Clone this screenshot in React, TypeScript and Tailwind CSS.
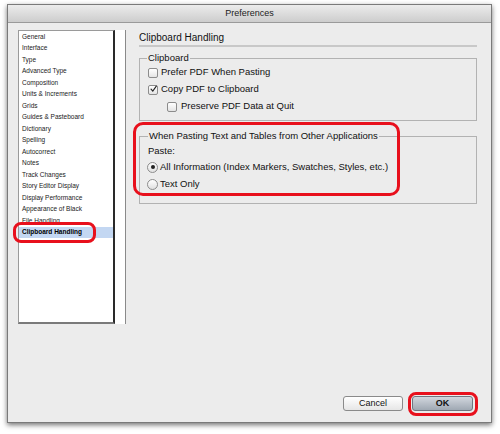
import React from 'react';

const FONT = { fontFamily: '"Liberation Sans", Arial, sans-serif' };

const sections = [
  'General',
  'Interface',
  'Type',
  'Advanced Type',
  'Composition',
  'Units & Increments',
  'Grids',
  'Guides & Pasteboard',
  'Dictionary',
  'Spelling',
  'Autocorrect',
  'Notes',
  'Track Changes',
  'Story Editor Display',
  'Display Performance',
  'Appearance of Black',
  'File Handling',
  'Clipboard Handling',
];

function Checkbox({ checked }: { checked?: boolean }) {
  return (
    <span className="w-[10px] h-[10px] rounded-[2px] border border-[#8c8c8c] bg-gradient-to-b from-white to-[#e4e4e4] flex items-center justify-center shrink-0">
      {checked && (
        <svg width="10" height="10" viewBox="0 0 10 10" className="-mt-[2px] ml-[1px]">
          <path d="M1.5 5.2 L4 8 L9 1" fill="none" stroke="#222" strokeWidth="1.6" strokeLinecap="round" />
        </svg>
      )}
    </span>
  );
}

function Radio({ checked }: { checked?: boolean }) {
  return (
    <span className="w-[11px] h-[11px] rounded-full border border-[#8c8c8c] bg-gradient-to-b from-white to-[#e0e0e0] flex items-center justify-center shrink-0">
      {checked && <span className="w-[4px] h-[4px] rounded-full bg-[#222]" />}
    </span>
  );
}

export default function App() {
  return (
    <div className="relative w-[500px] h-[434px] bg-white pt-[4px] pl-[7px]" style={FONT}>
      {/* Dialog window */}
      <div className="w-[485px] h-[419px] bg-[#ececec] border border-[#7a7a7a] shadow-[0_2px_5px_rgba(0,0,0,0.55)] flex flex-col">
        <div className="h-[18px] shrink-0 bg-gradient-to-b from-[#ececec] to-[#cdcdcd] border-b border-[#9a9a9a] flex items-center justify-center text-[9px] text-[#222]">
          Preferences
        </div>

        <div className="flex flex-1">
          {/* Sidebar list */}
          <div className="pl-[10px] pt-[7px] flex">
            <div className="w-[97px] h-[294px] bg-white border-l border-t border-[#9a9a9a] border-r-2 border-r-[#2a2a2a] border-b-2 border-b-[#7a7a7a]">
              {sections.map((s) => (
                <div
                  key={s}
                  className={`h-[11.53px] flex items-center pl-[3px] text-[6.5px] leading-none ${
                    s === 'Clipboard Handling' ? 'bg-[#c3d7f2] font-bold text-black' : 'text-[#1a1a1a]'
                  }`}
                >
                  {s}
                </div>
              ))}
            </div>
            <div className="w-[11px] h-[294px] bg-white border-r border-[#8a8a8a]" />
          </div>

          {/* Right pane */}
          <div className="flex-1 flex flex-col pl-[13px] pr-[14px]">
            <div className="mt-[9px] pb-[1px] border-b-2 border-[#c8c8c8] text-[10px] text-[#111] leading-[12px]">
              Clipboard Handling
            </div>

            <fieldset className="mt-[5px] border border-[#b2b2b2] pl-[8px] pr-[8px] pb-[5px] pt-0">
              <legend className="text-[9.5px] text-[#111] px-[1px] -ml-[1px] leading-[12px]">Clipboard</legend>
              <div className="flex items-center gap-[3px] h-[17px] text-[9.5px] text-[#111]">
                <Checkbox />
                <span>Prefer PDF When Pasting</span>
              </div>
              <div className="flex items-center gap-[3px] h-[17px] text-[9.5px] text-[#111]">
                <Checkbox checked />
                <span>Copy PDF to Clipboard</span>
              </div>
              <div className="flex items-center gap-[4px] h-[17px] pl-[19px] text-[9.5px] text-[#111]">
                <Checkbox />
                <span>Preserve PDF Data at Quit</span>
              </div>
            </fieldset>

            <fieldset className="mt-[9px] border border-[#b2b2b2] pl-[7px] pr-[8px] pb-[10px] pt-[1.5px]">
              <legend className="text-[9.5px] text-[#111] px-[1px] ml-[1px] leading-[12px]">
                When Pasting Text and Tables from Other Applications
              </legend>
              <div className="h-[15px] flex items-center text-[9.5px] text-[#111] pl-[1px]">Paste:</div>
              <div className="flex items-center gap-[2px] h-[17px] text-[9.5px] text-[#111]">
                <Radio checked />
                <span>All Information (Index Markers, Swatches, Styles, etc.)</span>
              </div>
              <div className="flex items-center gap-[2px] h-[17px] text-[9.5px] text-[#111]">
                <Radio />
                <span>Text Only</span>
              </div>
            </fieldset>

            <div className="mt-auto mb-[11px] flex justify-end gap-[9px] pr-[4px]">
              <button className="w-[60px] h-[15px] rounded-[3px] border border-[#8a8a8a] bg-gradient-to-b from-white to-[#e6e6e6] text-[9px] text-[#111] leading-none">
                Cancel
              </button>
              <button className="w-[61px] h-[15px] rounded-[3px] border border-[#6f7680] bg-gradient-to-b from-[#d2d7de] to-[#9fa8b3] text-[9px] font-bold text-[#111] leading-none">
                OK
              </button>
            </div>
          </div>
        </div>
      </div>

      {/* Red annotation outlines */}
      <div className="absolute left-[13px] top-[222px] w-[83px] h-[21px] border-[3px] border-[#e8101c] rounded-[8px]" />
      <div className="absolute left-[133px] top-[122px] w-[267px] h-[74px] border-[3px] border-[#e8101c] rounded-[10px]" />
      <div className="absolute left-[408px] top-[392px] w-[70px] h-[24px] border-[3px] border-[#e8101c] rounded-[8px]" />
    </div>
  );
}
